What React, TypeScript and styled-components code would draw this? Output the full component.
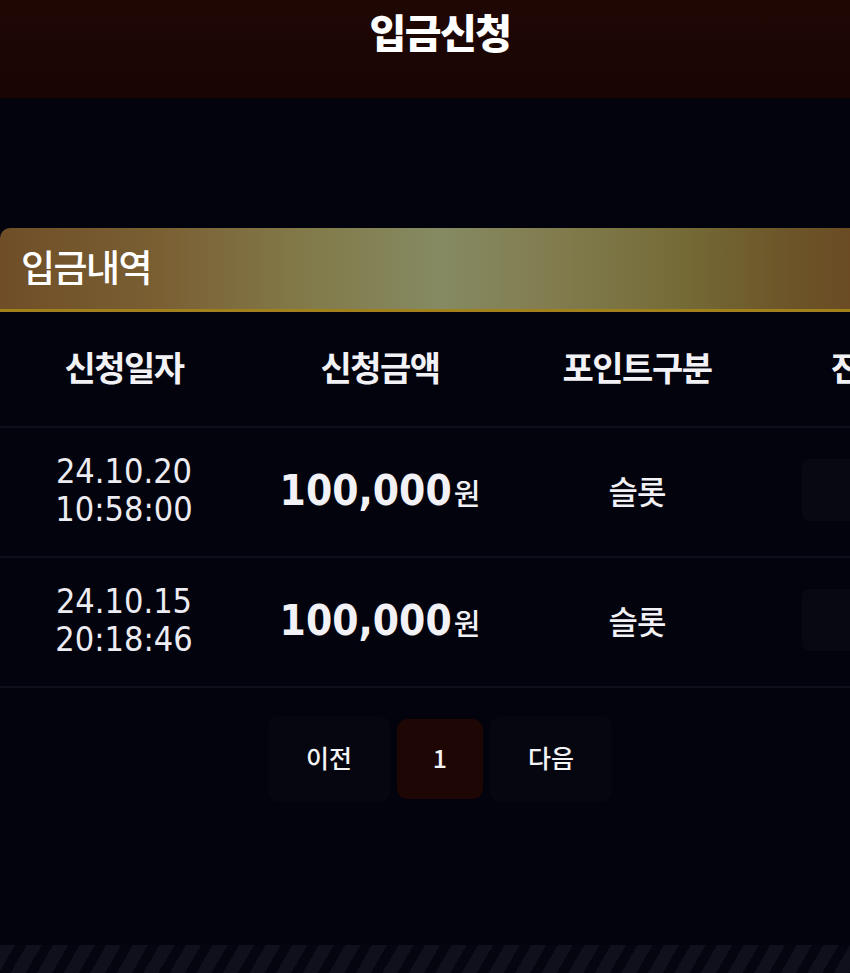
import { createGlobalStyle } from "styled-components";
import styled from "styled-components";

const GlobalStyle = createGlobalStyle`
  html, body {
    margin: 0;
    padding: 0;
    background: #03030e;
    overflow: hidden;
  }
  body {
    font-family: "Noto Sans CJK KR", "Noto Sans", sans-serif;
    color: #f1f1f5;
  }
`;

const Page = styled.div`
  width: 880px;
  min-height: 973px;
  display: flex;
  flex-direction: column;
  background: #03030e;
`;

const TopBar = styled.header`
  height: 98px;
  display: flex;
  justify-content: center;
  background: linear-gradient(180deg, #1f0704 0%, #190503 100%);
`;

const PageTitle = styled.h1`
  margin: 0;
  padding-top: 4px;
  font-size: 40px;
  font-weight: 900;
  letter-spacing: -1.5px;
  line-height: 54px;
  color: #ffffff;
`;

const Section = styled.section`
  margin-top: 130px;
  display: flex;
  flex-direction: column;
`;

const SectionHead = styled.div`
  height: 81px;
  display: flex;
  align-items: center;
  padding-left: 21px;
  border-top-left-radius: 10px;
  border-bottom: 3px solid #a2801c;
  background: linear-gradient(
    90deg,
    #6f4e27 0%,
    #7a5f33 18%,
    #827a4a 35%,
    #858a62 50%,
    #827d50 62%,
    #746a36 78%,
    #6c5428 90%,
    #6a4722 100%
  );
`;

const SectionTitle = styled.h2`
  margin: 0;
  padding-bottom: 6px;
  font-size: 37px;
  font-weight: 500;
  letter-spacing: -1.5px;
  color: #ffffff;
`;

const Table = styled.div`
  display: flex;
  flex-direction: column;
`;

const Row = styled.div<{ $head?: boolean }>`
  display: grid;
  grid-template-columns: 248px 264px 250px 256px;
  align-items: center;
  justify-items: center;
  height: ${(p) => (p.$head ? "116px" : "130px")};
  padding-bottom: ${(p) => (p.$head ? "6px" : "4px")};
  box-sizing: border-box;
  border-bottom: 2px solid #0f0f1c;
`;

const HeadCell = styled.div`
  font-size: 34px;
  font-weight: 700;
  letter-spacing: -1.5px;
  white-space: nowrap;
  color: #f2f2f6;
`;

const DateCell = styled.div`
  font-family: "DejaVu Sans Condensed", "DejaVu Sans", sans-serif;
  font-stretch: condensed;
  font-size: 34px;
  line-height: 38px;
  text-align: center;
  color: #ececf2;
`;

const AmountCell = styled.div`
  display: flex;
  align-items: baseline;
  gap: 2px;
`;

const Amount = styled.span`
  font-family: "DejaVu Sans Condensed", "DejaVu Sans", sans-serif;
  font-stretch: condensed;
  font-weight: 700;
  font-size: 42px;
  color: #f1f1f6;
`;

const Won = styled.span`
  font-size: 29px;
  font-weight: 500;
  color: #f1f1f6;
`;

const TextCell = styled.div`
  font-size: 32px;
  font-weight: 500;
  letter-spacing: -1px;
  color: #f1f1f6;
`;

const Status = styled.div`
  width: 176px;
  height: 62px;
  border-radius: 8px;
  background: #080813;
`;

const Pager = styled.nav`
  display: flex;
  justify-content: center;
  align-items: center;
  gap: 7px;
  padding-top: 28px;
`;

const PageButton = styled.button<{ $active?: boolean; $wide?: boolean }>`
  width: ${(p) => (p.$wide ? "122px" : "86px")};
  height: ${(p) => (p.$active ? "80px" : "86px")};
  border: none;
  border-radius: 10px;
  background: ${(p) => (p.$active ? "#1d0603" : "#060611")};
  color: #f4f4f6;
  font-family: "Noto Sans CJK KR", "Noto Sans", sans-serif;
  font-size: 25px;
  font-weight: 500;
  padding: 0 0 4px;
  cursor: pointer;
`;

const Stripes = styled.div`
  height: 40px;
  margin-top: 143px;
  background: repeating-linear-gradient(
    -60deg,
    #05050f 0px,
    #05050f 10px,
    #10101d 10px,
    #10101d 23px
  );
`;

type Deposit = {
  date: string;
  time: string;
  amount: string;
  kind: string;
};

const deposits: Deposit[] = [
  { date: "24.10.20", time: "10:58:00", amount: "100,000", kind: "슬롯" },
  { date: "24.10.15", time: "20:18:46", amount: "100,000", kind: "슬롯" },
];

export default function App() {
  return (
    <>
      <GlobalStyle />
      <Page>
        <TopBar>
          <PageTitle>입금신청</PageTitle>
        </TopBar>
        <Section>
          <SectionHead>
            <SectionTitle>입금내역</SectionTitle>
          </SectionHead>
          <Table>
            <Row $head>
              <HeadCell>신청일자</HeadCell>
              <HeadCell>신청금액</HeadCell>
              <HeadCell>포인트구분</HeadCell>
              <HeadCell>진행상태</HeadCell>
            </Row>
            {deposits.map((d) => (
              <Row key={d.date + d.time}>
                <DateCell>
                  {d.date}
                  <br />
                  {d.time}
                </DateCell>
                <AmountCell>
                  <Amount>{d.amount}</Amount>
                  <Won>원</Won>
                </AmountCell>
                <TextCell>{d.kind}</TextCell>
                <Status />
              </Row>
            ))}
          </Table>
          <Pager>
            <PageButton $wide>이전</PageButton>
            <PageButton $active>1</PageButton>
            <PageButton $wide>다음</PageButton>
          </Pager>
        </Section>
        <Stripes />
      </Page>
    </>
  );
}
